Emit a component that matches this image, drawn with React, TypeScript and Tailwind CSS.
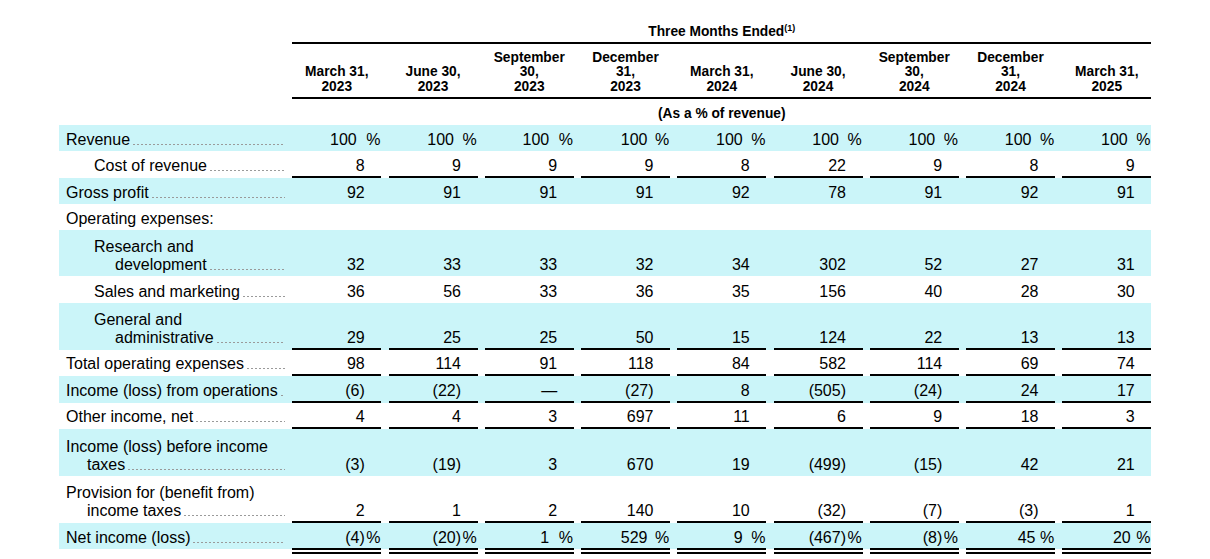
import React from "react";

type Row = {
  label: string[];
  indent: 0 | 1;
  vals: string[];
  cyan: boolean;
  h: string;
  border?: boolean;
  pct?: boolean;
  pads?: string[];
  dots?: boolean;
};

const heads: string[][] = [
  ["March 31,", "2023"],
  ["June 30,", "2023"],
  ["September", "30,", "2023"],
  ["December", "31,", "2023"],
  ["March 31,", "2024"],
  ["June 30,", "2024"],
  ["September", "30,", "2024"],
  ["December", "31,", "2024"],
  ["March 31,", "2025"],
];

const P8 = ["pr-[8px]", "pr-[7px]", "pr-[8px]", "pr-[6px]", "pr-[7px]", "pr-[7px]", "pr-[7px]", "pr-[7px]", "pr-[7px]"];
const PN = ["", "", "pr-[8px]", "pr-[6px]", "pr-[7px]", "", "", "pr-[3px]", "pr-[4px]"];

const rows: Row[] = [
  { label: ["Revenue"], indent: 0, vals: ["100", "100", "100", "100", "100", "100", "100", "100", "100"], cyan: true, h: "h-[26px]", pct: true, pads: P8, dots: true },
  { label: ["Cost of revenue"], indent: 1, vals: ["8", "9", "9", "9", "8", "22", "9", "8", "9"], cyan: false, h: "h-[27px]", border: true, dots: true },
  { label: ["Gross profit"], indent: 0, vals: ["92", "91", "91", "91", "92", "78", "91", "92", "91"], cyan: true, h: "h-[26px]", dots: true },
  { label: ["Operating expenses:"], indent: 0, vals: ["", "", "", "", "", "", "", "", ""], cyan: false, h: "h-[26px]", dots: false },
  { label: ["Research and", "development"], indent: 1, vals: ["32", "33", "33", "32", "34", "302", "52", "27", "31"], cyan: true, h: "h-[46px]", dots: true },
  { label: ["Sales and marketing"], indent: 1, vals: ["36", "56", "33", "36", "35", "156", "40", "28", "30"], cyan: false, h: "h-[27px]", dots: true },
  { label: ["General and", "administrative"], indent: 1, vals: ["29", "25", "25", "50", "15", "124", "22", "13", "13"], cyan: true, h: "h-[47px]", border: true, dots: true },
  { label: ["Total operating expenses"], indent: 0, vals: ["98", "114", "91", "118", "84", "582", "114", "69", "74"], cyan: false, h: "h-[26px]", border: true, dots: true },
  { label: ["Income (loss) from operations"], indent: 0, vals: ["(6)", "(22)", "—", "(27)", "8", "(505)", "(24)", "24", "17"], cyan: true, h: "h-[27px]", border: true, dots: true },
  { label: ["Other income, net"], indent: 0, vals: ["4", "4", "3", "697", "11", "6", "9", "18", "3"], cyan: false, h: "h-[26px]", border: true, dots: true },
  { label: ["Income (loss) before income", "taxes"], indent: 0, vals: ["(3)", "(19)", "3", "670", "19", "(499)", "(15)", "42", "21"], cyan: true, h: "h-[47px]", dots: true },
  { label: ["Provision for (benefit from)", "income taxes"], indent: 0, vals: ["2", "1", "2", "140", "10", "(32)", "(7)", "(3)", "1"], cyan: false, h: "h-[47px]", border: true, dots: true },
  { label: ["Net income (loss)"], indent: 0, vals: ["(4)", "(20)", "1", "529", "9", "(467)", "(8)", "45", "20"], cyan: true, h: "h-[26px]", pct: true, pads: PN, dots: true },
];

function Dots() {
  return (
    <span className="flex-1 h-[1px] mb-[4.5px] ml-[3px] bg-[linear-gradient(to_right,#9a9a9a_2px,transparent_2px)] bg-[length:4px_1px] bg-repeat-x" />
  );
}

function Label({ row }: { row: Row }) {
  const pb = row.border ? "pb-[3px]" : "pb-[2px]";
  const first = row.indent === 0 ? "pl-[7px]" : "pl-[35px]";
  const second = row.indent === 0 ? "pl-[28px]" : "pl-[56px]";
  if (row.label.length === 1) {
    return (
      <div className={`w-[226px] shrink-0 flex flex-col justify-end ${pb}`}>
        <div className={`flex items-end ${first}`}>
          <span className="whitespace-nowrap">{row.label[0]}</span>
          {row.dots ? <Dots /> : null}
        </div>
      </div>
    );
  }
  return (
    <div className={`w-[226px] shrink-0 flex flex-col justify-end ${pb}`}>
      <div className={`whitespace-nowrap ${first}`}>{row.label[0]}</div>
      <div className={`flex items-end ${second}`}>
        <span className="whitespace-nowrap">{row.label[1]}</span>
        {row.dots ? <Dots /> : null}
      </div>
    </div>
  );
}

function Cell({ row, i }: { row: Row; i: number }) {
  const v = row.vals[i];
  const neg = v.startsWith("(");
  const pad = row.pct && !neg && row.pads ? row.pads[i] : "";
  const cls = row.border ? "border-b-2 border-black pb-[1px]" : "pb-[2px]";
  return (
    <div className={`w-[89px] shrink-0 flex items-end justify-end ${cls}`}>
      <span className={`whitespace-nowrap ${pad}`}>{v}</span>
      <span className="w-[16.5px] shrink-0 pl-[1.5px] whitespace-nowrap">{row.pct ? "%" : ""}</span>
    </div>
  );
}

export default function App() {
  return (
    <div className="w-[1210px] h-[559px] overflow-hidden bg-white text-black font-['Liberation_Sans',Arial,sans-serif]">
      <div className="ml-[59px] w-[1092.25px]">
        {/* Header title */}
        <div className="flex">
          <div className="w-[233.25px] shrink-0" />
          <div className="flex-1 border-b-2 border-black text-center font-bold text-[13.75px] leading-[16px] pt-[23.5px] pb-[2.5px]">
            Three Months Ended
            <span className="relative -top-[5px] text-[9px] font-bold leading-none">(1)</span>
          </div>
        </div>
        {/* Column heads */}
        <div className="flex">
          <div className="w-[233.25px] shrink-0" />
          <div className="flex-1 flex items-end border-b-2 border-black pt-[6.5px] pb-[3px] font-bold text-[13.75px] leading-[14.5px]">
            {heads.map((h, i) => (
              <React.Fragment key={i}>
                {i > 0 ? <div className="w-[7.25px] shrink-0" /> : null}
                <div className="w-[89px] shrink-0 text-center">
                  {h.map((l, j) => (
                    <div key={j} className="whitespace-nowrap">{l}</div>
                  ))}
                </div>
              </React.Fragment>
            ))}
          </div>
        </div>
        {/* As a % of revenue */}
        <div className="flex h-[26px]">
          <div className="w-[233.25px] shrink-0" />
          <div className="flex-1 text-center font-bold text-[13.75px] leading-[22px] pt-[4px]">(As a % of revenue)</div>
        </div>
        {/* Body */}
        <div className="text-[16px] leading-[18px]">
          {rows.map((r, ri) => (
            <div key={ri} className={`flex ${r.h} ${r.cyan ? "bg-[#cbf5f9]" : "bg-white"}`}>
              <Label row={r} />
              {r.vals.map((_, i) => (
                <React.Fragment key={i}>
                  <div className="w-[7.25px] shrink-0" />
                  <Cell row={r} i={i} />
                </React.Fragment>
              ))}
            </div>
          ))}
          <div className="flex h-[6px] -mt-[1px]">
            <div className="w-[226px] shrink-0" />
            {heads.map((_, i) => (
              <React.Fragment key={i}>
                <div className="w-[7.25px] shrink-0" />
                <div className="w-[89px] shrink-0 border-b-[6px] border-double border-black" />
              </React.Fragment>
            ))}
          </div>
        </div>
      </div>
    </div>
  );
}
